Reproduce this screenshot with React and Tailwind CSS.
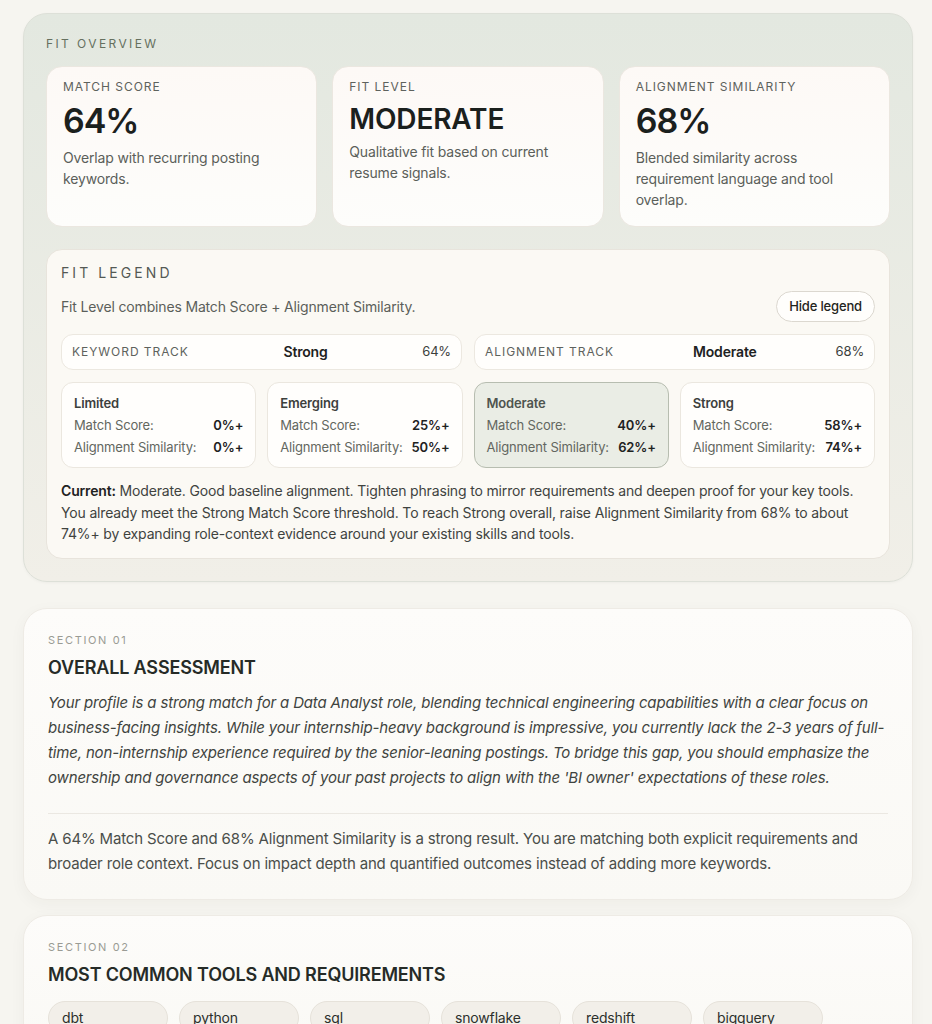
import { useState } from 'react';

const stats = [
  {
    label: 'Match Score',
    value: '64%',
    big: true,
    note: 'Overlap with recurring posting keywords.',
  },
  {
    label: 'Fit Level',
    value: 'MODERATE',
    big: false,
    note: 'Qualitative fit based on current resume signals.',
  },
  {
    label: 'Alignment Similarity',
    value: '68%',
    big: true,
    note: 'Blended similarity across requirement language and tool overlap.',
  },
];

const tracks = [
  { label: 'Keyword Track', level: 'Strong', pct: '64%' },
  { label: 'Alignment Track', level: 'Moderate', pct: '68%' },
];

const tiers = [
  { name: 'Limited', match: '0%+', align: '0%+' },
  { name: 'Emerging', match: '25%+', align: '50%+' },
  { name: 'Moderate', match: '40%+', align: '62%+', current: true },
  { name: 'Strong', match: '58%+', align: '74%+' },
];

const tools = ['dbt', 'python', 'sql', 'snowflake', 'redshift', 'bigquery'];

function StatCard({ stat }) {
  return (
    <div className="rounded-2xl border border-[#ebe7e0] bg-gradient-to-b from-[#fdf9f6] to-[#fdfdfb] px-4 pt-3 pb-4">
      <div className="text-xs leading-4 uppercase tracking-[0.08em] text-[#5e625d]">
        {stat.label}
      </div>
      {stat.big ? (
        <div className="mt-1.5 text-[34px] leading-10 font-semibold tracking-[-0.03em] text-[#1b201d]">
          {stat.value}
        </div>
      ) : (
        <div className="mt-2 text-[28px] leading-8 font-semibold text-[#1b201d]">
          {stat.value}
        </div>
      )}
      <p className="mt-1.5 text-sm leading-[21px] text-[#5b5f5a]">{stat.note}</p>
    </div>
  );
}

function TierCard({ tier }) {
  return (
    <div
      className={
        tier.current
          ? 'rounded-xl border border-[#b7bdb0] bg-[#eaede5] px-3 py-[9px] text-[13px] leading-[22px]'
          : 'rounded-xl border border-[#ebe7df] bg-[#fffefc] px-3 py-[9px] text-[13px] leading-[22px]'
      }
    >
      <div className={`font-semibold ${tier.current ? 'text-[#4e544e]' : 'text-[#3c403c]'}`}>
        {tier.name}
      </div>
      <div className="flex justify-between gap-2 text-[#63675f]">
        <span>Match Score:</span>
        <span className="font-semibold text-[#1e221f]">{tier.match}</span>
      </div>
      <div className="flex justify-between gap-2 text-[#63675f]">
        <span>Alignment Similarity:</span>
        <span className="font-semibold text-[#1e221f]">{tier.align}</span>
      </div>
    </div>
  );
}

export default function App() {
  const [showLegend, setShowLegend] = useState(true);

  return (
    <div
      className="min-h-screen bg-[#f6f5f0] pl-[23px] pr-[19px] pt-[13px] pb-10 tracking-[-0.01em] text-[#1f2420]"
      style={{ fontFamily: 'Inter, "Noto Sans", sans-serif' }}
    >
      {/* Fit overview panel */}
      <section className="rounded-[24px] border border-[#dde0d8] bg-gradient-to-b from-[#e3e8e0] to-[#f1efe8] px-[22px] pt-[22px] pb-[22px] shadow-[0_1px_3px_rgba(0,0,0,0.04)]">
        <div className="text-xs leading-4 uppercase tracking-[0.2em] text-[#66705f]">
          Fit Overview
        </div>
        <div className="mt-[14px] grid grid-cols-3 gap-[15px]">
          {stats.map((s) => (
            <StatCard key={s.label} stat={s} />
          ))}
        </div>

        {/* Legend */}
        <div className="mt-[22px] rounded-2xl border border-[#e8e4dc] bg-[#fbf9f4] px-[14px] pt-[13px] pb-[13px]">
          <div className="text-sm leading-5 uppercase tracking-[0.22em] text-[#545954]">
            Fit Legend
          </div>
          <div className="mt-2 flex items-center justify-between">
            <p className="text-sm text-[#5b5f5a]">
              Fit Level combines Match Score + Alignment Similarity.
            </p>
            <button
              onClick={() => setShowLegend(!showLegend)}
              className="h-[31px] rounded-full border border-[#dcd8d0] bg-[#fffefc] px-3 text-[13px] font-medium text-[#1f2420]"
            >
              {showLegend ? 'Hide legend' : 'Show legend'}
            </button>
          </div>

          {showLegend && (
            <>
              <div className="mt-3 grid grid-cols-2 gap-3">
                {tracks.map((t) => (
                  <div
                    key={t.label}
                    className="flex h-9 items-center justify-between rounded-xl border border-[#ece8e0] bg-[#fffefc] px-[10px]"
                  >
                    <span className="text-xs uppercase tracking-[0.08em] text-[#5e625d]">{t.label}</span>
                    <span className="text-sm font-semibold text-[#1e221f]">{t.level}</span>
                    <span className="text-[13px] text-[#3c403c]">{t.pct}</span>
                  </div>
                ))}
              </div>

              <div className="mt-3 grid grid-cols-4 gap-[11px]">
                {tiers.map((t) => (
                  <TierCard key={t.name} tier={t} />
                ))}
              </div>
            </>
          )}

          <p className="mt-3 text-sm leading-[21.5px] text-[#3f433f]">
            <span className="font-semibold text-[#1e221f]">Current:</span> Moderate. Good baseline
            alignment. Tighten phrasing to mirror requirements and deepen proof for your key tools.
            You already meet the Strong Match Score threshold. To reach Strong overall, raise
            Alignment Similarity from 68% to about 74%+ by expanding role-context evidence around
            your existing skills and tools.
          </p>
        </div>
      </section>

      {/* Section 01 */}
      <section className="mt-[26px] rounded-[24px] border border-[#eeebe5] bg-gradient-to-b from-[#fdfcfa] to-[#faf9f5] px-6 pt-[23px] pb-[23px] shadow-[0_4px_16px_rgba(60,50,30,0.04)]">
        <div className="text-[11px] leading-4 uppercase tracking-[0.15em] text-[#9a9b94]">
          Section 01
        </div>
        <h2 className="mt-1.5 text-lg leading-7 font-semibold uppercase text-[#262b27]">
          Overall Assessment
        </h2>
        <p className="mt-2 text-[15px] leading-[25px] italic text-[#3f4440]">
          Your profile is a strong match for a Data Analyst role, blending technical engineering
          capabilities with a clear focus on business-facing insights. While your internship-heavy
          background is impressive, you currently lack the 2-3 years of full-time, non-internship
          experience required by the senior-leaning postings. To bridge this gap, you should
          emphasize the ownership and governance aspects of your past projects to align with the
          'BI owner' expectations of these roles.
        </p>
        <div className="mt-[23px] border-t border-[#ebe8e2]" />
        <p className="mt-3 text-[15px] leading-[25px] text-[#4a4e4a]">
          A 64% Match Score and 68% Alignment Similarity is a strong result. You are matching both
          explicit requirements and broader role context. Focus on impact depth and quantified
          outcomes instead of adding more keywords.
        </p>
      </section>

      {/* Section 02 */}
      <section className="mt-[15px] rounded-[24px] border border-[#eeebe5] bg-gradient-to-b from-[#fdfcfa] to-[#faf9f5] px-6 pt-[23px] pb-[23px] shadow-[0_4px_16px_rgba(60,50,30,0.04)]">
        <div className="text-[11px] leading-4 uppercase tracking-[0.15em] text-[#9a9b94]">
          Section 02
        </div>
        <h2 className="mt-1.5 text-lg leading-7 font-semibold uppercase text-[#262b27]">
          Most Common Tools and Requirements
        </h2>
        <div className="mt-3 flex flex-wrap gap-[11px]">
          {tools.map((tool) => (
            <span
              key={tool}
              className="flex h-[34px] w-[120px] items-center rounded-full border border-[#e6e2da] bg-[#f2efe9] px-[13px] text-sm text-[#2c302c]"
            >
              {tool}
            </span>
          ))}
        </div>
      </section>
    </div>
  );
}
